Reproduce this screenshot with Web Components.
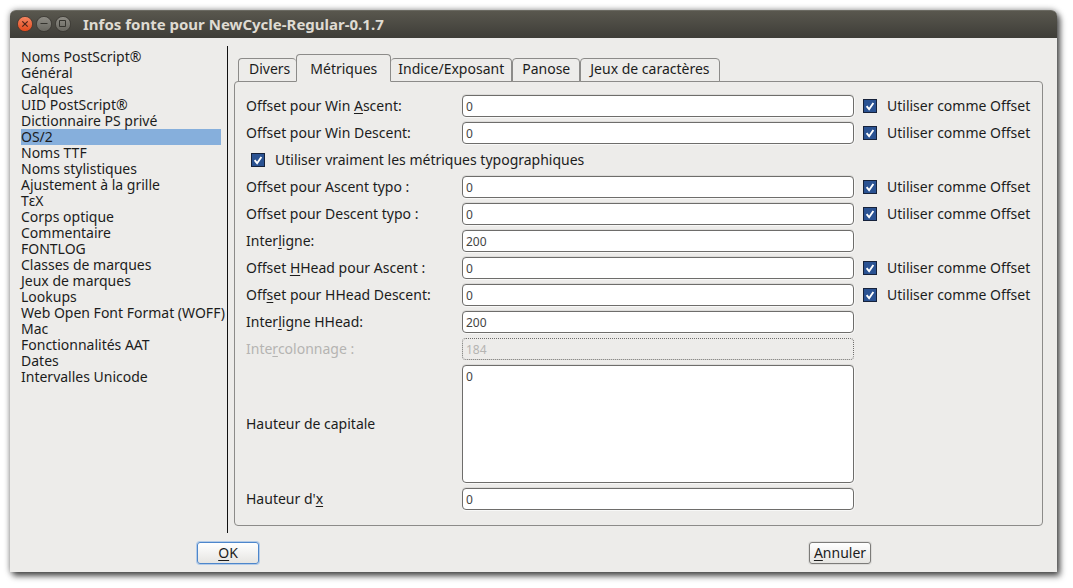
<!DOCTYPE html>
<html lang="fr">
<head>
<meta charset="utf-8">
<meta name="viewport" content="width=device-width, initial-scale=1">
<title>Infos fonte pour NewCycle-Regular-0.1.7</title>
<style>
  body {
    margin: 0;
    padding: 10px 16px 16px 10px;
    background: #fff;
    color: #1c1c1c;
    font: 14px/16px "Noto Sans", "Open Sans", sans-serif;
    --surface: #edecea;
    --line: #8c8b89;
    --field-line: #6e6d6b;
    --accent: #86afdc;
  }
</style>
</head>
<body>
<font-info-window heading="Infos fonte pour NewCycle-Regular-0.1.7">
  <section-list slot="sections" selected="5"></section-list>
  <tab-panel slot="content" tabs="Divers|Métriques|Indice/Exposant|Panose|Jeux de caractères" selected="1">
    <metric-field value="0" offset>Offset pour Win <u>A</u>scent:</metric-field>
    <metric-field value="0" offset>Offset pour Win Descent:</metric-field>
    <check-box class="line">Utiliser vraiment les métriques typographiques</check-box>
    <metric-field value="0" offset>Offset pour Ascent typo :</metric-field>
    <metric-field value="0" offset>Offset pour Descent typo :</metric-field>
    <metric-field value="200">Inter<u>l</u>igne:</metric-field>
    <metric-field value="0" offset>Offset <u>H</u>Head pour Ascent :</metric-field>
    <metric-field value="0" offset>Off<u>s</u>et pour HHead Descent:</metric-field>
    <metric-field value="200">Inter<u>l</u>igne HHead:</metric-field>
    <metric-field value="184" disabled>Inte<u>r</u>colonnage :</metric-field>
    <metric-field value="0" multiline>Hauteur de capitale</metric-field>
    <metric-field value="0">Hauteur d'<u>x</u></metric-field>
  </tab-panel>
  <dialog-button slot="actions" primary><u>O</u>K</dialog-button>
  <dialog-button slot="actions"><u>A</u>nnuler</dialog-button>
</font-info-window>

<script>
const mnemonic = `::slotted(u) { text-underline-offset: 2px; text-decoration-thickness: 1px; text-decoration-skip-ink: none; }`;

class FontInfoWindow extends HTMLElement {
  connectedCallback() {
    this.attachShadow({ mode: "open" }).innerHTML = `
      <style>
        :host { display: block; background: var(--surface); border-radius: 6px 6px 0 0;
                box-shadow: 3px 4px 6px rgba(0,0,0,.65), 0 0 6px rgba(0,0,0,.4); }
        header { display: flex; align-items: center; gap: 3px; height: 28px; padding: 0 7px 1px;
                 box-sizing: border-box; border-radius: 6px 6px 0 0; border-top: 1px solid #6b6a62;
                 background: linear-gradient(#59574e, #3e3d38); }
        header button { width: 16px; height: 16px; padding: 0; border: 0; background: none; display: block; }
        svg { display: block; }
        h1 { margin: 0 0 0 9px; font-size: 15px; line-height: 20px; font-weight: 700; color: #dfdbd2; }
        main { display: flex; padding: 8px 14px 0 11px; }
        nav { width: 206px; flex: none; padding-top: 3px; border-right: 1px solid #111; }
        article { flex: 1; min-width: 0; padding: 8px 0 7px 6px; }
        footer { display: flex; justify-content: space-between; padding: 9px 186px 8px 187px; }
      </style>
      <header>
        <button aria-label="Fermer"><svg width="16" height="16" viewBox="0 0 16 16">
          <defs><linearGradient id="r" x2="0" y2="1"><stop stop-color="#f58763"/><stop offset="1" stop-color="#e2481a"/></linearGradient></defs>
          <circle cx="8" cy="8" r="7.6" fill="url(#r)" stroke="#3c352f" stroke-width=".8"/>
          <path d="M5.3 5.3l5.4 5.4m0-5.4l-5.4 5.4" stroke="#4a2419" stroke-width="1.2"/></svg></button>
        <button aria-label="Réduire"><svg width="16" height="16" viewBox="0 0 16 16">
          <defs><linearGradient id="g" x2="0" y2="1"><stop stop-color="#8f8d86"/><stop offset="1" stop-color="#67665f"/></linearGradient></defs>
          <circle cx="8" cy="8" r="7.6" fill="url(#g)" stroke="#373530" stroke-width=".8"/>
          <path d="M4.5 7.5h7" stroke="#35342f"/></svg></button>
        <button aria-label="Agrandir"><svg width="16" height="16" viewBox="0 0 16 16">
          <defs><linearGradient id="m" x2="0" y2="1"><stop stop-color="#8f8d86"/><stop offset="1" stop-color="#67665f"/></linearGradient></defs>
          <circle cx="8" cy="8" r="7.6" fill="url(#m)" stroke="#373530" stroke-width=".8"/>
          <path d="M4.5 4.5h6v6h-6z" fill="none" stroke="#35342f"/></svg></button>
        <h1></h1>
      </header>
      <main>
        <nav><slot name="sections"></slot></nav>
        <article><slot name="content"></slot></article>
      </main>
      <footer><slot name="actions"></slot></footer>`;
    this.shadowRoot.querySelector("h1").textContent = this.getAttribute("heading");
  }
}

class SectionList extends HTMLElement {
  connectedCallback() {
    const names = ["Noms PostScript®", "Général", "Calques", "UID PostScript®", "Dictionnaire PS privé", "OS/2",
      "Noms TTF", "Noms stylistiques", "Ajustement à la grille", "TεX", "Corps optique", "Commentaire", "FONTLOG",
      "Classes de marques", "Jeux de marques", "Lookups", "Web Open Font Format (WOFF)", "Mac",
      "Fonctionnalités AAT", "Dates", "Intervalles Unicode"];
    const selected = Number(this.getAttribute("selected"));
    this.attachShadow({ mode: "open" }).innerHTML = `
      <style>
        :host { display: block; }
        ul { margin: 0; padding: 0; width: 200px; list-style: none; }
        button { display: block; width: 100%; height: 16px; padding: 0; border: 0; background: none;
                 font: inherit; color: inherit; text-align: left; white-space: nowrap; }
        button[aria-current] { background: var(--accent); }
      </style>
      <ul>${names.map((n, i) => `<li><button${i === selected ? ' aria-current="true"' : ""}>${n}</button></li>`).join("")}</ul>`;
  }
}

class TabPanel extends HTMLElement {
  connectedCallback() {
    const selected = Number(this.getAttribute("selected"));
    const tabs = this.getAttribute("tabs").split("|");
    this.attachShadow({ mode: "open" }).innerHTML = `
      <style>
        :host { display: block; }
        .strip { display: flex; align-items: flex-end; height: 28px; padding-left: 4px; margin-bottom: -1px; position: relative; }
        .strip button { height: 24px; padding: 0 9px 2px; border: 1px solid var(--line); border-radius: 4px 4px 0 0;
          box-sizing: border-box; background: var(--surface); font: inherit; color: inherit; white-space: nowrap; }
        .strip button[aria-selected=true] { height: 28px; padding: 2px 13px 0; border-bottom-color: var(--surface); }
        .strip button[aria-selected=true] + button { border-left: 0; padding: 0 7px 2px; }
        .strip button.before { border-right: 0; padding: 0 6px 2px 10px; }
        .panel { display: flex; flex-direction: column; gap: 5px; padding: 13px 11px 15px;
          border: 1px solid var(--line); border-radius: 4px; }
        ::slotted(.line) { height: 22px; padding-left: 5px; }
      </style>
      <div class="strip" role="tablist">${tabs.map((t, i) =>
        `<button role="tab" aria-selected="${i === selected}"${i === selected - 1 ? ' class="before"' : ""}>${t}</button>`).join("")}</div>
      <div class="panel" role="tabpanel"><slot></slot></div>`;
  }
}

class CheckBox extends HTMLElement {
  connectedCallback() {
    this.attachShadow({ mode: "open" }).innerHTML = `
      <style>
        :host { display: flex; align-items: center; }
        label { display: flex; align-items: center; gap: 10px; white-space: nowrap; }
        input { appearance: none; margin: 0; width: 14px; height: 14px; box-sizing: border-box;
                border: 1px solid #16223b; background: #fff; }
        input:checked { background: #2a5292 url('data:image/svg+xml,<svg xmlns="http://www.w3.org/2000/svg" viewBox="0 0 12 12"><path d="M2.6 6.2l2.5 3L9.4 3" fill="none" stroke="white" stroke-width="1.9"/></svg>'); }
      </style>
      <label><input type="checkbox" checked><span><slot></slot></span></label>`;
  }
}

class MetricField extends HTMLElement {
  connectedCallback() {
    const value = this.getAttribute("value");
    const off = this.hasAttribute("disabled") ? " disabled" : "";
    const control = this.hasAttribute("multiline")
      ? `<textarea id="f">${value}</textarea>`
      : `<input id="f" type="text" value="${value}"${off}>`;
    this.attachShadow({ mode: "open" }).innerHTML = `
      <style>
        :host { display: grid; grid-template-columns: 216px minmax(0, 1fr) 177px; align-items: center; }
        :host([disabled]) { color: #b5b4b2; }
        .name { white-space: nowrap; }
        #f { display: block; width: 100%; height: 22px; margin: 0; box-sizing: border-box; padding: 0 3px;
             border: 1px solid var(--field-line); border-radius: 4px; background: #fff; color: #444; outline: none;
             font: 12px/20px "Noto Sans", "Open Sans", sans-serif; resize: none;
             box-shadow: 0 -1px 0 #dddcda, 0 1px 0 #f8f8f7, 1px 0 0 #f8f8f7; }
        textarea#f { height: 118px; padding-top: 1px; }
        #f:disabled { border-style: dotted; background: var(--surface); color: #b5b4b2; box-shadow: none; }
        check-box { margin-left: 9px; }
        ${mnemonic}
      </style>
      <label class="name" for="f"><slot></slot></label>
      ${control}
      ${this.hasAttribute("offset") ? "<check-box>Utiliser comme Offset</check-box>" : ""}`;
  }
}

class DialogButton extends HTMLElement {
  connectedCallback() {
    this.attachShadow({ mode: "open" }).innerHTML = `
      <style>
        :host { display: block; }
        button { display: block; box-sizing: border-box; width: 62px; height: 22px; padding: 0;
          border: 1px solid #7c7b79; border-radius: 3px; background: linear-gradient(#fff, #e6e5e2);
          box-shadow: 0 0 0 1px #dddcda; font: inherit; color: inherit; }
        :host([primary]) button { border-color: #4d86cb; box-shadow: 0 0 0 1px #b3cbe8; }
        ${mnemonic}
      </style>
      <button type="button"><slot></slot></button>`;
  }
}

customElements.define("font-info-window", FontInfoWindow);
customElements.define("section-list", SectionList);
customElements.define("tab-panel", TabPanel);
customElements.define("check-box", CheckBox);
customElements.define("metric-field", MetricField);
customElements.define("dialog-button", DialogButton);
</script>
</body>
</html>
